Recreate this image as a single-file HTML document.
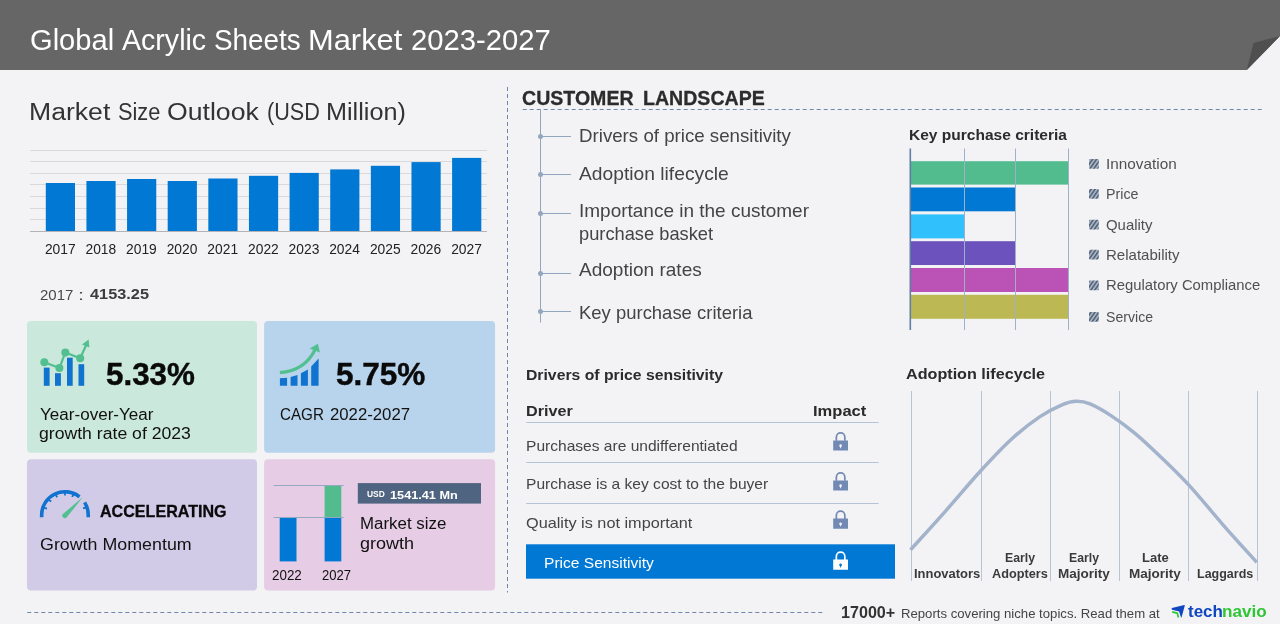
<!DOCTYPE html>
<html><head><meta charset="utf-8"><title>Global Acrylic Sheets Market 2023-2027</title>
<style>
html,body{margin:0;padding:0;}
body{width:1280px;height:624px;position:relative;overflow:hidden;background:#f3f3f5;font-family:"Liberation Sans",sans-serif;}
.t{position:absolute;white-space:nowrap;line-height:1;transform-origin:0 50%;display:block;}
svg{position:absolute;left:0;top:0;}
.box{position:absolute;border-radius:5px;}
</style></head><body>
<svg width="1280" height="624" viewBox="0 0 1280 624">
<!-- stat boxes -->
<rect x="27" y="321" width="230" height="131.7" rx="4" fill="#cbe8dd"/>
<rect x="264.1" y="321" width="231" height="131.7" rx="4" fill="#b8d4ec"/>
<rect x="27" y="459.2" width="230" height="131.3" rx="4" fill="#d2cbe8"/>
<rect x="264.1" y="459.2" width="231" height="131.3" rx="4" fill="#e6cce4"/>
<!-- header -->
<path d="M0 0H1280V36L1246.8 69.9H0Z" fill="#666666"/>
<path d="M1246.8 69.9L1253.5 43L1280 36Z" fill="#4f4f4f"/>
<!-- market size chart -->
<g stroke="#d9d9dc" stroke-width="1">
<path d="M30 150.5H487M30 161.5H487M30 173.5H487M30 184.5H487M30 196.5H487M30 208.5H487M30 219.5H487"/>
</g>
<g fill="#0078d4">
<rect x="45.80" y="183" width="29.2" height="48.0"/><rect x="86.43" y="181" width="29.2" height="50.0"/><rect x="127.06" y="179" width="29.2" height="52.0"/><rect x="167.69" y="181" width="29.2" height="50.0"/><rect x="208.32" y="178.5" width="29.2" height="52.5"/><rect x="248.95" y="175.8" width="29.2" height="55.2"/><rect x="289.58" y="172.9" width="29.2" height="58.1"/><rect x="330.21" y="169.4" width="29.2" height="61.6"/><rect x="370.84" y="165.8" width="29.2" height="65.2"/><rect x="411.47" y="162.1" width="29.2" height="68.9"/><rect x="452.10" y="157.9" width="29.2" height="73.1"/>
</g>
<path d="M30 231.5H487" stroke="#b4b4b8" stroke-width="1"/>
<!-- dashed separators -->
<g stroke="#6f87a8" stroke-width="1" fill="none" stroke-dasharray="4 3">
<path d="M507.5 87V592.5"/>
<path d="M27.3 612.5H824"/>
<path d="M522.7 109.5H1262"/>
</g>
<!-- tree -->
<g stroke="#93a6bf" stroke-width="1" fill="none">
<path d="M540.5 110V322.5"/>
<path d="M540.5 136.5H571M540.5 174.5H571M540.5 213.5H571M540.5 273.5H571M540.5 311.5H571"/>
</g>
<g fill="#93a6bf">
<circle cx="540.5" cy="136.5" r="2.5"/><circle cx="540.5" cy="174.5" r="2.5"/><circle cx="540.5" cy="213.5" r="2.5"/><circle cx="540.5" cy="273.5" r="2.5"/><circle cx="540.5" cy="311.5" r="2.5"/>
</g>
<!-- key purchase criteria -->
<rect x="911" y="161.2" width="157" height="23.4" fill="#52bc8f"/>
<rect x="911" y="187.5" width="104.2" height="23.8" fill="#0078d4"/>
<rect x="911" y="214.4" width="53.4" height="24" fill="#30c1fc"/>
<rect x="911" y="241.2" width="104.2" height="23.8" fill="#6b52bd"/>
<rect x="911" y="268" width="157" height="24" fill="#bb52b5"/>
<rect x="911" y="294.8" width="157" height="24" fill="#bcb853"/>
<g stroke="#9fb1c9" stroke-width="1"><path d="M964.5 148.5V330M1015.5 148.5V330M1068.5 148.5V330"/></g>
<path d="M910.3 148.5V330" stroke="#5f7ea6" stroke-width="1.6"/>
<defs>
<pattern id="hatch" width="3.2" height="3.2" patternUnits="userSpaceOnUse" patternTransform="rotate(-55)">
<rect width="3.2" height="3.2" fill="#a3b3ca"/><rect width="3.2" height="1.5" fill="#566070"/>
</pattern>
</defs>
<g fill="url(#hatch)">
<rect x="1089" y="159" width="9.8" height="9.8" rx="1"/>
<rect x="1089" y="189" width="9.8" height="9.8" rx="1"/>
<rect x="1089" y="219.7" width="9.8" height="9.8" rx="1"/>
<rect x="1089" y="249.7" width="9.8" height="9.8" rx="1"/>
<rect x="1089" y="280.4" width="9.8" height="9.8" rx="1"/>
<rect x="1089" y="312" width="9.8" height="9.8" rx="1"/>
</g>
<!-- drivers table -->
<g stroke="#b5c3d6" stroke-width="1"><path d="M526.3 422.5H878.7M526.3 462.5H878.7M526.3 503.5H878.7"/></g>
<rect x="526" y="544.3" width="369" height="34.4" fill="#0078d4"/>

<g transform="translate(840.6 440.4)" fill="#7189b3"><path d="M-5.1 0.4V-3.2A5.1 5.1 0 0 1 5.1 -3.2V0.4H3.4V-3.2A3.4 3.4 0 0 0 -3.4 -3.2V0.4Z"/>
<path fill-rule="evenodd" d="M-7.4 0H7.4V10.2H-7.4ZM0 3.9A1.35 1.35 0 0 0 -0.75 6.4L0 8.3L0.75 6.4A1.35 1.35 0 0 0 0 3.9Z"/></g>
<g transform="translate(840.6 480.4)" fill="#7189b3"><path d="M-5.1 0.4V-3.2A5.1 5.1 0 0 1 5.1 -3.2V0.4H3.4V-3.2A3.4 3.4 0 0 0 -3.4 -3.2V0.4Z"/>
<path fill-rule="evenodd" d="M-7.4 0H7.4V10.2H-7.4ZM0 3.9A1.35 1.35 0 0 0 -0.75 6.4L0 8.3L0.75 6.4A1.35 1.35 0 0 0 0 3.9Z"/></g>
<g transform="translate(840.6 518.5)" fill="#7189b3"><path d="M-5.1 0.4V-3.2A5.1 5.1 0 0 1 5.1 -3.2V0.4H3.4V-3.2A3.4 3.4 0 0 0 -3.4 -3.2V0.4Z"/>
<path fill-rule="evenodd" d="M-7.4 0H7.4V10.2H-7.4ZM0 3.9A1.35 1.35 0 0 0 -0.75 6.4L0 8.3L0.75 6.4A1.35 1.35 0 0 0 0 3.9Z"/></g>
<g transform="translate(840.6 559.6)" fill="#ffffff"><path d="M-5.1 0.4V-3.2A5.1 5.1 0 0 1 5.1 -3.2V0.4H3.4V-3.2A3.4 3.4 0 0 0 -3.4 -3.2V0.4Z"/>
<path fill-rule="evenodd" d="M-7.4 0H7.4V10.2H-7.4ZM0 3.9A1.35 1.35 0 0 0 -0.75 6.4L0 8.3L0.75 6.4A1.35 1.35 0 0 0 0 3.9Z"/></g>
<!-- adoption lifecycle -->
<g stroke="#b7c4d6" stroke-width="1"><path d="M911.5 391V581M981.5 391V581M1050.5 391V581M1119.5 391V581M1188.5 391V581M1257.5 391V581"/></g>
<path id="curve" d="M910.5 549.9C916.2 543.5 933.1 525.1 944.9 511.8C956.7 498.5 970.0 482.5 981.2 470.3C992.4 458.1 1002.4 447.4 1012.2 438.5C1022.0 429.6 1031.6 422.2 1040 416.6C1048.4 411.0 1056.5 407.2 1062.5 404.6C1068.5 402.1 1071.7 401.4 1076.3 401.3C1080.9 401.2 1084.2 401.5 1090 403.9C1095.8 406.3 1103.5 410.7 1111 415.6C1118.5 420.5 1126.5 426.3 1134.7 433.1C1142.9 439.9 1151.0 447.6 1160 456.2C1169.0 464.8 1178.2 473.5 1188.7 484.9C1199.2 496.3 1211.7 511.9 1223 524.8C1234.3 537.7 1251.1 556.0 1256.7 562.3" fill="none" stroke="#a2b3cb" stroke-width="3.5" stroke-linecap="butt" stroke-linejoin="round"/>
<!-- icon 1: yoy -->
<g fill="#0f73cf">
<rect x="43.8" y="367.6" width="5.8" height="18.2"/><rect x="55" y="373.2" width="5.9" height="12.6"/><rect x="67" y="357.7" width="5.7" height="28.1"/><rect x="78.5" y="364.2" width="5.7" height="21.6"/>
</g>
<g fill="#52bf90" stroke="none">
<circle cx="44.3" cy="362.2" r="4"/><circle cx="59.4" cy="368.1" r="4"/><circle cx="65.3" cy="352.4" r="4"/><circle cx="80.2" cy="358.3" r="4"/>
<path d="M88.6 339.6L82 344.5L89.4 347.6Z"/>
</g>
<path d="M44.3 362.2L59.4 368.1L65.3 352.4L80.2 358.3L86.2 345" fill="none" stroke="#52bf90" stroke-width="2.2" stroke-linejoin="round"/>
<!-- icon 2: cagr -->
<g fill="#0f73cf">
<path d="M279.9 378.3L287.1 377.7V385.8H279.9Z"/>
<path d="M290.6 377.1L297.5 374.9V385.8H290.6Z"/>
<path d="M300.9 373.2L307.9 369.5V385.8H300.9Z"/>
<path d="M311.2 366.5L318.6 358.6V385.8H311.2Z"/>
</g>
<path d="M279.9 372.6C296 371.5 308 364 315.2 349.5" fill="none" stroke="#52bf90" stroke-width="3.2"/>
<path d="M317.9 343.8L309.7 348.6L319.9 352.6Z" fill="#52bf90"/>
<!-- icon 3: gauge -->
<path d="M41.65 517.2V515A23.3 23.3 0 0 1 79.5 496.8" fill="none" stroke="#0f73cf" stroke-width="3.6"/>
<path d="M84.6 502.4A23.3 23.3 0 0 1 88.25 515V517.2" fill="none" stroke="#0f73cf" stroke-width="3.6"/>
<g stroke="#0f73cf" stroke-width="1.8" fill="none">
<path d="M43.5 507.6L47 508.6M48.2 499.6L51.2 501.6M55.4 494.2L57.2 497.2M65 492V495.6M73.6 493.8L72.2 497M86.4 507.4L83 508.4"/>
</g>
<path d="M82.9 497.1L66.8 517.3A2.6 2.6 0 0 1 62.6 514.3Z" fill="#52bf90"/>
<!-- icon 4: market growth -->
<rect x="279.7" y="517.3" width="16.8" height="44.1" fill="#0078d4"/>
<rect x="324.6" y="517.3" width="16.7" height="44.1" fill="#0078d4"/>
<rect x="324.6" y="485.2" width="16.7" height="32.1" fill="#52bc8f"/>
<g stroke="#94a8c0" stroke-width="1"><path d="M273.5 485.5H343.6M273.5 517.5H343.6"/></g>
<rect x="357.8" y="483.1" width="123.2" height="20.5" fill="#4f6480"/>
<!-- technavio logo mark -->
<path d="M1171.9 608.1L1184.3 604.9Q1185 604.8 1184.8 605.6L1181.6 617.3Q1181.3 618 1181 617.2L1179.1 611.5L1172 609.7Q1171.2 609 1171.9 608.1Z" fill="#1046c0"/>
<path d="M1172.2 611.9L1177.2 613.1L1178.5 617.4" fill="none" stroke="#2fc636" stroke-width="1.7" stroke-linejoin="round"/>
</svg>
<div id="tx" style="position:absolute;left:0;top:0;width:1280px;height:624px;will-change:transform;">
<span class="t" style="left:29.63px;top:25.62px;font-size:28.8px;color:#ffffff;transform:scaleX(1.0112);">Global</span>
<span class="t" style="left:121.50px;top:25.62px;font-size:28.8px;color:#ffffff;transform:scaleX(0.9923);">Acrylic</span>
<span class="t" style="left:214.13px;top:25.62px;font-size:28.8px;color:#ffffff;transform:scaleX(0.9674);">Sheets</span>
<span class="t" style="left:308.39px;top:25.62px;font-size:28.8px;color:#ffffff;transform:scaleX(1.0714);">Market</span>
<span class="t" style="left:410.93px;top:25.62px;font-size:28.8px;color:#ffffff;transform:scaleX(1.0155);">2023-2027</span>
<span class="t" style="left:28.92px;top:100.53px;font-size:23px;color:#333333;transform:scaleX(1.1564);">Market</span>
<span class="t" style="left:117.95px;top:100.53px;font-size:23px;color:#333333;transform:scaleX(0.9474);">Size</span>
<span class="t" style="left:166.74px;top:100.53px;font-size:23px;color:#333333;transform:scaleX(1.1574);">Outlook</span>
<span class="t" style="left:266.78px;top:100.53px;font-size:23px;color:#333333;transform:scaleX(0.9403);">(USD</span>
<span class="t" style="left:326.23px;top:100.53px;font-size:23px;color:#333333;transform:scaleX(1.0964);">Million)</span>
<span class="t" style="left:44.89px;top:243.32px;font-size:13.8px;color:#222;">2017</span>
<span class="t" style="left:85.47px;top:243.32px;font-size:13.8px;color:#222;">2018</span>
<span class="t" style="left:126.10px;top:243.32px;font-size:13.8px;color:#222;">2019</span>
<span class="t" style="left:166.68px;top:243.32px;font-size:13.8px;color:#222;">2020</span>
<span class="t" style="left:207.36px;top:243.32px;font-size:13.8px;color:#222;">2021</span>
<span class="t" style="left:248.04px;top:243.32px;font-size:13.8px;color:#222;">2022</span>
<span class="t" style="left:288.62px;top:243.32px;font-size:13.8px;color:#222;">2023</span>
<span class="t" style="left:329.15px;top:243.32px;font-size:13.8px;color:#222;">2024</span>
<span class="t" style="left:369.88px;top:243.32px;font-size:13.8px;color:#222;">2025</span>
<span class="t" style="left:410.51px;top:243.32px;font-size:13.8px;color:#222;">2026</span>
<span class="t" style="left:451.19px;top:243.32px;font-size:13.8px;color:#222;">2027</span>
<span class="t" style="left:39.99px;top:288.47px;font-size:14.8px;color:#4a4a4a;transform:scaleX(1.0161);">2017</span>
<span class="t" style="left:77.89px;top:288.47px;font-size:14.8px;color:#4a4a4a;transform:scaleX(1.4667);">:</span>
<span class="t" style="left:89.69px;top:286.13px;font-size:15.2px;color:#3c3c3c;font-weight:bold;transform:scaleX(1.0737);">4153.25</span>
<span class="t" style="left:105.51px;top:359.25px;font-size:31.6px;color:#0a0a0a;font-weight:bold;transform:scaleX(0.9926);-webkit-text-stroke:0.45px #0a0a0a;">5.33%</span>
<span class="t" style="left:40.07px;top:406.79px;font-size:15.6px;color:#111111;transform:scaleX(1.0941);">Year-over-Year</span>
<span class="t" style="left:39.32px;top:425.79px;font-size:15.6px;color:#111111;transform:scaleX(1.1304);">growth rate of 2023</span>
<span class="t" style="left:336.31px;top:359.25px;font-size:31.6px;color:#0a0a0a;font-weight:bold;transform:scaleX(0.9971);-webkit-text-stroke:0.45px #0a0a0a;">5.75%</span>
<span class="t" style="left:279.52px;top:406.79px;font-size:15.6px;color:#111111;transform:scaleX(0.9747);">CAGR</span>
<span class="t" style="left:329.85px;top:406.79px;font-size:15.6px;color:#111111;transform:scaleX(1.0735);">2022-2027</span>
<span class="t" style="left:99.70px;top:503.20px;font-size:16.3px;color:#0a0a0a;font-weight:bold;transform:scaleX(0.9881);-webkit-text-stroke:0.3px #0a0a0a;">ACCELERATING</span>
<span class="t" style="left:39.60px;top:536.79px;font-size:15.6px;color:#111111;transform:scaleX(1.1440);">Growth Momentum</span>
<span class="t" style="left:271.53px;top:568.15px;font-size:14px;color:#111111;transform:scaleX(0.9577);">2022</span>
<span class="t" style="left:321.75px;top:568.15px;font-size:14px;color:#111111;transform:scaleX(0.9342);">2027</span>
<span class="t" style="left:366.76px;top:488.96px;font-size:9.5px;color:#ffffff;font-weight:bold;transform:scaleX(0.8856);">USD</span>
<span class="t" style="left:389.85px;top:490.01px;font-size:11.8px;color:#ffffff;font-weight:bold;transform:scaleX(1.0770);">1541.41 Mn</span>
<span class="t" style="left:359.50px;top:515.79px;font-size:15.6px;color:#111111;transform:scaleX(1.0825);">Market size</span>
<span class="t" style="left:360.01px;top:535.79px;font-size:15.6px;color:#111111;transform:scaleX(1.1559);">growth</span>
<span class="t" style="left:522.12px;top:87.90px;font-size:20.2px;color:#2b2b2b;font-weight:bold;transform:scaleX(0.9690);-webkit-text-stroke:0.3px #2b2b2b;">CUSTOMER</span>
<span class="t" style="left:642.74px;top:87.90px;font-size:20.2px;color:#2b2b2b;font-weight:bold;transform:scaleX(0.9691);-webkit-text-stroke:0.3px #2b2b2b;">LANDSCAPE</span>
<span class="t" style="left:578.56px;top:126.59px;font-size:18.2px;color:#444;transform:scaleX(1.0277);">Drivers of price sensitivity</span>
<span class="t" style="left:579.20px;top:164.59px;font-size:18.2px;color:#444;transform:scaleX(1.0581);">Adoption lifecycle</span>
<span class="t" style="left:578.73px;top:201.59px;font-size:18.2px;color:#444;transform:scaleX(1.0436);">Importance in the customer</span>
<span class="t" style="left:578.89px;top:224.59px;font-size:18.2px;color:#444;transform:scaleX(1.0046);">purchase basket</span>
<span class="t" style="left:579.20px;top:260.59px;font-size:18.2px;color:#444;transform:scaleX(1.0465);">Adoption rates</span>
<span class="t" style="left:578.58px;top:303.59px;font-size:18.2px;color:#444;transform:scaleX(1.0151);">Key purchase criteria</span>
<span class="t" style="left:908.56px;top:127.30px;font-size:15px;color:#2b2b2b;font-weight:bold;transform:scaleX(1.0354);">Key purchase criteria</span>
<span class="t" style="left:1105.82px;top:156.81px;font-size:14.4px;color:#505050;transform:scaleX(1.0647);">Innovation</span>
<span class="t" style="left:1106.11px;top:186.81px;font-size:14.4px;color:#505050;transform:scaleX(0.9904);">Price</span>
<span class="t" style="left:1106.08px;top:217.81px;font-size:14.4px;color:#505050;transform:scaleX(1.0381);">Quality</span>
<span class="t" style="left:1106.05px;top:247.81px;font-size:14.4px;color:#505050;transform:scaleX(1.0443);">Relatability</span>
<span class="t" style="left:1106.07px;top:277.81px;font-size:14.4px;color:#505050;transform:scaleX(1.0313);">Regulatory Compliance</span>
<span class="t" style="left:1106.11px;top:309.81px;font-size:14.4px;color:#505050;transform:scaleX(0.9806);">Service</span>
<span class="t" style="left:525.65px;top:367.30px;font-size:15px;color:#2b2b2b;font-weight:bold;transform:scaleX(1.0497);">Drivers of price sensitivity</span>
<span class="t" style="left:525.82px;top:403.30px;font-size:15px;color:#2b2b2b;font-weight:bold;transform:scaleX(1.0776);">Driver</span>
<span class="t" style="left:812.70px;top:403.30px;font-size:15px;color:#2b2b2b;font-weight:bold;transform:scaleX(1.1026);">Impact</span>
<span class="t" style="left:525.64px;top:439.47px;font-size:14.8px;color:#444;transform:scaleX(1.0514);">Purchases are undifferentiated</span>
<span class="t" style="left:525.64px;top:477.47px;font-size:14.8px;color:#444;transform:scaleX(1.0515);">Purchase is a key cost to the buyer</span>
<span class="t" style="left:525.73px;top:516.47px;font-size:14.8px;color:#444;transform:scaleX(1.0986);">Quality is not important</span>
<span class="t" style="left:544.04px;top:556.47px;font-size:14.8px;color:#ffffff;transform:scaleX(1.0518);">Price Sensitivity</span>
<span class="t" style="left:906.38px;top:366.30px;font-size:15px;color:#2b2b2b;font-weight:bold;transform:scaleX(1.0767);">Adoption lifecycle</span>
<span class="t" style="left:914.01px;top:566.83px;font-size:13.2px;color:#3a3a3a;font-weight:bold;transform:scaleX(0.9828);">Innovators</span>
<span class="t" style="left:1004.75px;top:550.83px;font-size:13.2px;color:#3a3a3a;font-weight:bold;transform:scaleX(0.9316);">Early</span>
<span class="t" style="left:992.41px;top:566.83px;font-size:13.2px;color:#3a3a3a;font-weight:bold;transform:scaleX(0.9633);">Adopters</span>
<span class="t" style="left:1068.96px;top:550.83px;font-size:13.2px;color:#3a3a3a;font-weight:bold;transform:scaleX(0.9285);">Early</span>
<span class="t" style="left:1057.68px;top:566.83px;font-size:13.2px;color:#3a3a3a;font-weight:bold;transform:scaleX(1.0248);">Majority</span>
<span class="t" style="left:1141.86px;top:550.83px;font-size:13.2px;color:#3a3a3a;font-weight:bold;transform:scaleX(0.9846);">Late</span>
<span class="t" style="left:1129.08px;top:566.83px;font-size:13.2px;color:#3a3a3a;font-weight:bold;transform:scaleX(1.0248);">Majority</span>
<span class="t" style="left:1196.94px;top:566.83px;font-size:13.2px;color:#3a3a3a;font-weight:bold;transform:scaleX(0.9471);">Laggards</span>
<span class="t" style="left:840.58px;top:604.63px;font-size:15.8px;color:#333333;font-weight:bold;transform:scaleX(1.0206);">17000+</span>
<span class="t" style="left:900.72px;top:607.67px;font-size:12.2px;color:#444;transform:scaleX(1.0788);">Reports covering niche topics. Read them at</span>
<span class="t" style="left:1187.69px;top:603.79px;font-size:15.6px;color:#1046c0;font-weight:bold;transform:scaleX(1.0887);">tech</span>
<span class="t" style="left:1221.70px;top:603.79px;font-size:15.6px;color:#2fc636;font-weight:bold;transform:scaleX(1.0965);">navio</span>
</div>
</body></html>
